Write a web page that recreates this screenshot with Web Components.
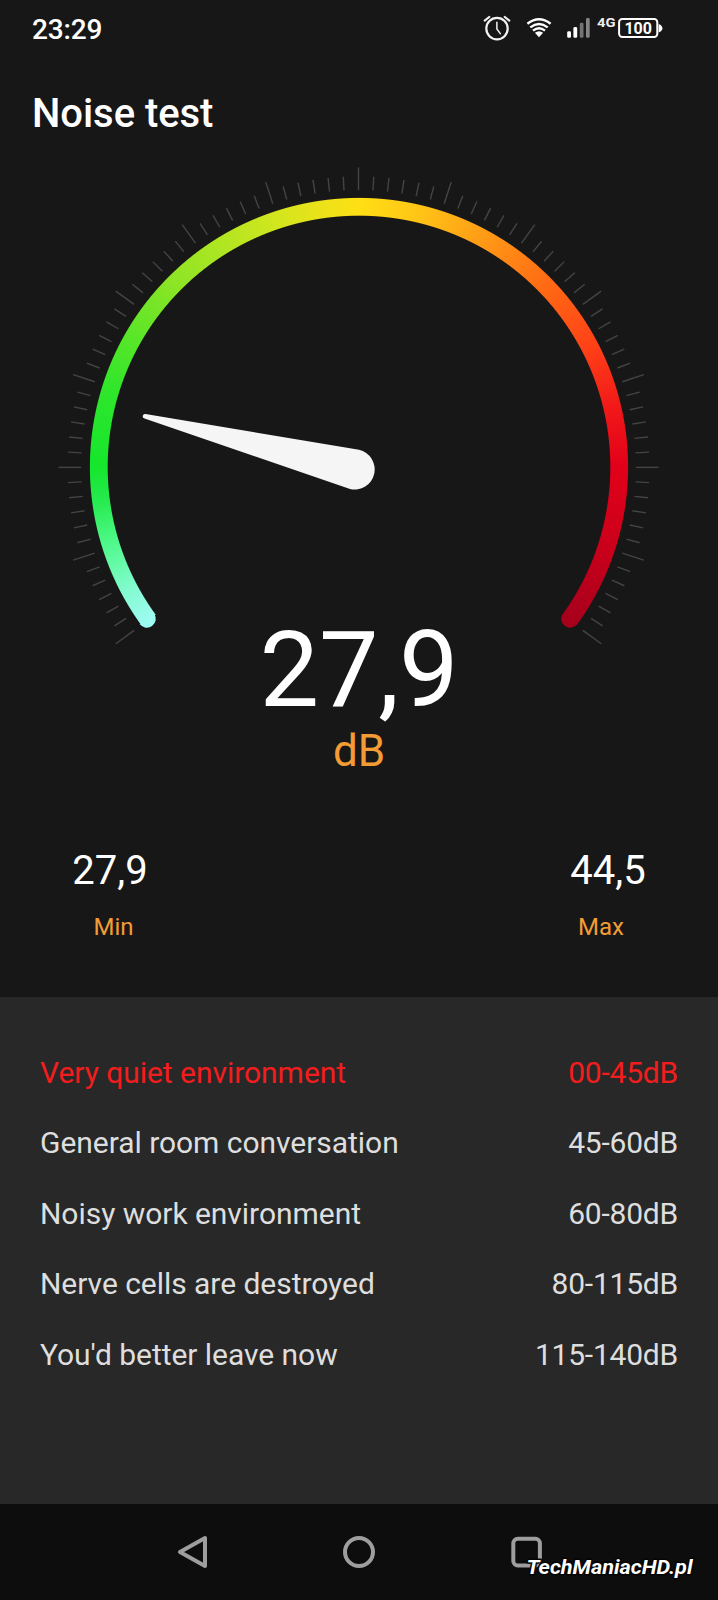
<!DOCTYPE html>
<html lang="en">
<head>
<meta charset="utf-8">
<title>Noise test</title>
<style>
html,body{margin:0;background:#171717}
body{width:718px;height:1600px;overflow:hidden;font-family:Roboto,"Liberation Sans",sans-serif;color:#fff}
</style>
</head>
<body>
<noise-app></noise-app>
<script>
const define = (name, html, setup) => customElements.define(name, class extends HTMLElement {
  connectedCallback() {
    if (this.shadowRoot) return;
    const t = document.createElement('template');
    t.innerHTML = html;
    this.attachShadow({mode: 'open'}).append(t.content.cloneNode(true));
    if (setup) setup(this.shadowRoot, this);
  }
});

define('status-bar', `
<style>
:host{display:flex;justify-content:space-between;height:58px;padding-left:32px}
time{font-size:28px;font-weight:500;line-height:59px;letter-spacing:-.15px}
svg{display:block}
</style>
<time><slot></slot></time>
<svg width="258" height="58" viewBox="460 0 258 58" fill="none">
  <g stroke="#f2f2f2" stroke-width="2.2" stroke-linecap="round">
    <circle cx="497" cy="28.6" r="10.7"/>
    <path d="M484.7 20.6 489.2 17M504.8 17 509.3 20.6"/>
    <path d="M496.9 22.3V29L500.3 33.6" stroke-width="1.5"/>
  </g>
  <path d="M539 37.2 534.9 32.8Q539 29.8 543.1 32.8Z" fill="#fff"/>
  <g stroke="#fff" stroke-width="2.4">
    <path d="M527.4 23.8Q539 14.8 550.6 23.8"/>
    <path d="M530.3 27.4Q539 20.7 547.7 27.4"/>
    <path d="M533 30.6Q539 26 545 30.6"/>
  </g>
  <rect x="567.2" y="31.2" width="3.8" height="6.6" rx="1.4" fill="#fff"/>
  <rect x="573.4" y="27" width="3.8" height="10.8" rx="1.4" fill="#fff"/>
  <rect x="579.8" y="22.7" width="3.7" height="15.1" rx="1.4" fill="#747474"/>
  <rect x="586" y="18" width="3.7" height="19.8" rx="1.4" fill="#858585"/>
  <text x="597" y="26.8" font-size="13.5" font-weight="700" fill="#eee" textLength="18.5" lengthAdjust="spacingAndGlyphs">4G</text>
  <rect x="619.1" y="19" width="38.2" height="18" rx="3.2" stroke="#fff" stroke-width="2"/>
  <path d="M658.6 24V32.5Q662.4 31 662.4 28.2T658.6 24Z" fill="#fff"/>
  <text x="624.4" y="33.7" font-size="16" font-weight="700" fill="#fff" textLength="27.6" lengthAdjust="spacing">100</text>
</svg>`);

define('title-bar', `
<style>
:host{display:block;height:109px;padding-left:32px}
h1{margin:0;font-size:40px;font-weight:500;line-height:112px;letter-spacing:-.05px}
</style><h1><slot></slot></h1>`);

define('noise-gauge', `
<style>
:host{display:grid;height:679px}
:host>*{grid-area:1/1}
svg{display:block;width:718px;height:627px}
.ring{width:540px;height:540px;margin:30.4px 0 0 88.5px;
 background:conic-gradient(from 234deg,#9dfbf1 0deg,#83fbcf 8deg,#4ff98b 19deg,#24ea4b 29deg,#15e62d 36deg,#31e62b 54deg,#8de525 81deg,#d1e61e 107deg,#ffdf15 126deg,#ffc516 139deg,#ff9f16 153deg,#ff6c14 171deg,#ff4217 188deg,#f11819 203deg,#e20019 216deg,#cc001b 233deg,#a7001b 252deg,transparent 252deg);
 -webkit-mask:radial-gradient(circle,transparent 250.8px,#000 251.8px,#000 268.6px,transparent 269.6px);
 mask:radial-gradient(circle,transparent 250.8px,#000 251.8px,#000 268.6px,transparent 269.6px)}
.reading{padding-top:449.5px;text-align:center}
.value{font-size:106px;line-height:106px;letter-spacing:-.2px}
.unit{font-size:44px;line-height:52px;margin-top:2px;color:#f39c35}
</style>
<svg class="ticks" viewBox="0 167 718 627"><g stroke="#444" stroke-width="1.4"></g></svg>
<div class="ring"></div>
<svg viewBox="0 167 718 627">
  <path class="cap0" fill="#9dfbf1"/><path class="cap1" fill="#a7001b"/>
  <path fill="#f5f5f5" d="M145.5 414.1 359 449.8A20 20 0 1 1 350 489.1L144.5 418.5A2.2 2.2 0 0 1 145.5 414.1Z"/>
</svg>
<div class="reading"><div class="value"><slot></slot></div><div class="unit"><slot name="unit"></slot></div></div>`,
root => {
  const cx = 358.5, cy = 467.4;
  const at = (deg, r) => {
    const a = deg * Math.PI / 180;
    return (cx + r * Math.cos(a)).toFixed(2) + ' ' + (cy + r * Math.sin(a)).toFixed(2);
  };
  let s = '';
  for (let i = 0; i <= 84; i++) {
    const deg = 144 + i * 3;
    s += `<path d="M${at(deg, 277.3)}L${at(deg, i % 6 ? 291 : 300)}"/>`;
  }
  root.querySelector('.ticks g').innerHTML = s;
  root.querySelector('.cap0').setAttribute('d', `M${at(144.4, 251.4)}A8.85 8.85 0 0 1 ${at(144.4, 269.1)}Z`);
  root.querySelector('.cap1').setAttribute('d', `M${at(35.6, 251.4)}A8.85 8.85 0 0 0 ${at(35.6, 269.1)}Z`);
});

define('level-stat', `
<style>
:host{display:flex;flex-direction:column;align-items:center;width:220px}
.v{font-size:40px;line-height:50px}
.l{font-size:24px;line-height:28px;margin-top:16.5px;color:#f39c35;margin-left:var(--nudge,0)}
</style>
<div class="v"><slot></slot></div><div class="l"><slot name="label"></slot></div>`);

define('level-row', `
<style>
:host{display:flex;justify-content:space-between;font-size:30px;line-height:70.4px;height:70.4px;color:#dedede;letter-spacing:-.04px}
:host([active]){color:#f31d1d}
.r{letter-spacing:-.22px}
</style>
<span><slot></slot></span><span class="r"><slot name="range"></slot></span>`);

define('nav-bar', `
<style>
:host{display:flex;height:96px;background:#0d0d0d;position:relative}
svg{display:block}
.mark{position:absolute;left:516px;top:40px}
</style>
<svg width="718" height="96" viewBox="0 1504 718 96" fill="none" stroke="#9e9e9e" stroke-width="4" stroke-linejoin="round">
  <path d="M180 1552 205 1538V1566Z"/>
  <circle cx="359" cy="1552" r="14"/>
  <rect x="513.3" y="1538.8" width="26.6" height="26.6" rx="4.5"/>
</svg>
<svg class="mark" width="190" height="50" viewBox="516 1544 190 50">
  <text x="526.5" y="1573.8" font-size="20.5" font-weight="700" font-style="italic" fill="#fff" stroke="#050505" stroke-width="3" stroke-linejoin="round" paint-order="stroke" textLength="166" lengthAdjust="spacingAndGlyphs">TechManiacHD.pl</text>
</svg>`);

define('noise-app', `
<style>
:host{display:flex;flex-direction:column;width:718px;height:1600px;background:#171717}
.stats{display:flex;justify-content:space-between;height:151px}
.levels{background:#282828;height:466px;padding:41px 40px 0}
</style>
<status-bar>23:29</status-bar>
<title-bar>Noise test</title-bar>
<noise-gauge>27,9<span slot="unit">dB</span></noise-gauge>
<div class="stats">
  <level-stat style="--nudge:7px">27,9<span slot="label">Min</span></level-stat>
  <level-stat style="--nudge:-14px">44,5<span slot="label">Max</span></level-stat>
</div>
<div class="levels">
  <level-row active>Very quiet environment<span slot="range">00-45dB</span></level-row>
  <level-row>General room conversation<span slot="range">45-60dB</span></level-row>
  <level-row>Noisy work environment<span slot="range">60-80dB</span></level-row>
  <level-row>Nerve cells are destroyed<span slot="range">80-115dB</span></level-row>
  <level-row>You'd better leave now<span slot="range">115-140dB</span></level-row>
</div>
<nav-bar></nav-bar>`);
</script>
</body>
</html>
